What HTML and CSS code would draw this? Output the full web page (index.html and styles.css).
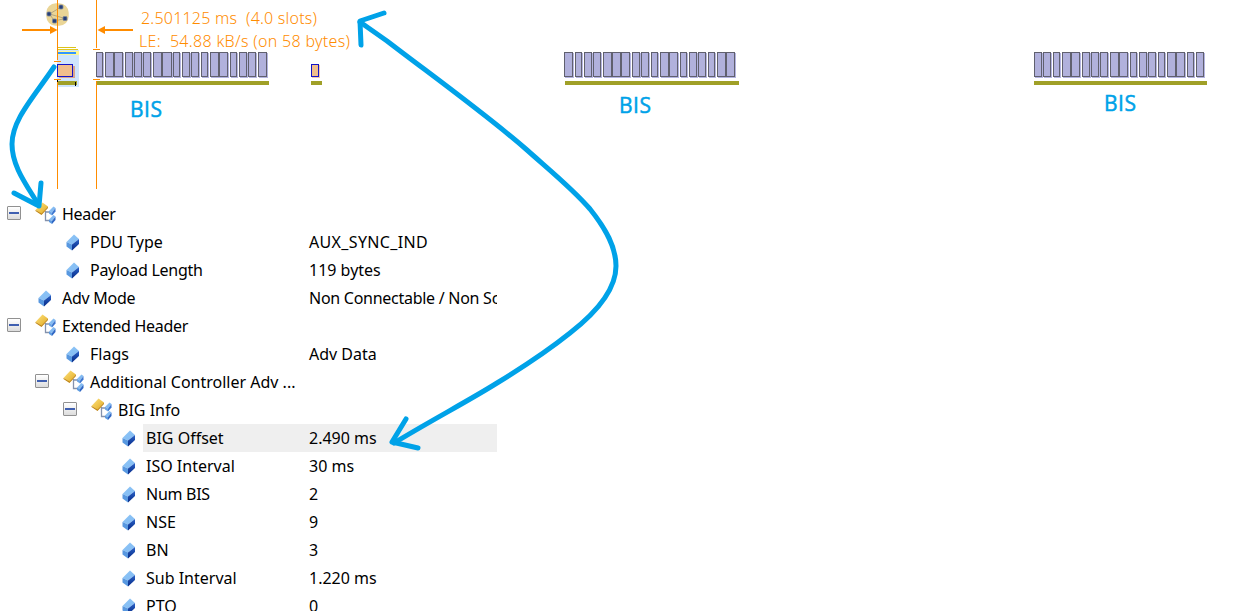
FILE: index.html
```html
<!DOCTYPE html>
<html lang="en">
<head>
    <meta charset="UTF-8">
    <meta name="viewport" content="width=device-width, initial-scale=1.0">
    <title>Packet Timeline</title>
    <link rel="stylesheet" href="styles.css">
</head>
<body>
    <svg class="defs" width="0" height="0">
        <defs>
            <linearGradient id="topFace" x1="0" y1="0" x2="1" y2="1">
                <stop offset="0" stop-color="#8cc4f5"/>
                <stop offset="1" stop-color="#84bcf4"/>
            </linearGradient>
            <linearGradient id="sideFace" x1="0" y1="0" x2="0" y2="1">
                <stop offset="0" stop-color="#2a62c8"/>
                <stop offset="1" stop-color="#062a86"/>
            </linearGradient>
            <linearGradient id="goldFace" x1="0" y1="0" x2="1" y2="1">
                <stop offset="0" stop-color="#ffe480"/>
                <stop offset="1" stop-color="#e0a820"/>
            </linearGradient>
            <symbol id="field" viewBox="0 0 14 17">
                <path d="M0.5 8 L8 0.5 L13 5 L6 10.5 Z" fill="url(#topFace)"/>
                <path d="M0.5 8 L6 10.5 V16.5 L0.5 12.500 Z" fill="#5898e0"/>
                <path d="M6 10.5 L13 5 V10 L6 16.5 Z" fill="url(#sideFace)"/>
            </symbol>
            <symbol id="group" viewBox="0 0 22 22">
                <path d="M10.5 9 V18.5 H15 M10.5 10 H15" fill="none" stroke="#8492ad" stroke-width="1.3"/>
                <path d="M0.5 8 L7.5 0.5 L13 4.5 L6.5 12 Z" fill="url(#goldFace)"/>
                <path d="M0.5 8 L6.5 11.5 L13 4.5 V6 L6.5 13 L0.5 9 Z" fill="#bf8412"/>
                <path d="M14 9 L18.5 4.5 L20.5 6 L17 10.5 Z" fill="#83bbf2"/>
                <path d="M14 9 L17 10.5 V13.5 L14 11.5 Z" fill="#6aa5e6"/>
                <path d="M17 10.5 L20.5 6 V9.5 L17 13.5 Z" fill="#3c75cf"/>
                <path d="M14 17.5 L18.5 13 L20.5 14.5 L17 19 Z" fill="#83bbf2"/>
                <path d="M14 17.5 L17 19 V22 L14 20 Z" fill="#5c9ae0"/>
                <path d="M17 19 L20.5 14.5 V18 L17 22 Z" fill="#2f66c4"/>
            </symbol>
        </defs>
    </svg>

    <svg class="timeline" width="1247" height="200" viewBox="0 0 1247 200">
        <!-- selected packet -->
        <rect x="57" y="50" width="22" height="37" fill="#cfe5fd"/>
        <rect x="57" y="47" width="19" height="1" fill="#dcc21c"/>
        <rect x="57" y="49" width="21" height="1" fill="#e0c81c"/>
        <rect x="57" y="51" width="22" height="4" fill="#fff890"/>
        <rect x="58" y="52" width="18" height="2" fill="#3296ff"/>
        <rect x="59" y="66" width="16" height="12" fill="#d9a58e"/>
        <rect x="57.5" y="64.5" width="15" height="12" class="packet"/>
        <rect x="58" y="81" width="19" height="4" class="span"/>
        <rect x="75" y="82" width="1" height="4" fill="#000"/>
        <rect x="57" y="80" width="1" height="2" fill="#000"/>

        <g id="bars"></g>

        <!-- auxiliary packet -->
        <rect x="312" y="65" width="8" height="13" fill="#f3c9ae"/>
        <rect x="311.5" y="64.5" width="7" height="12" class="packet"/>
        <rect x="311" y="81" width="11" height="4" class="span"/>

        <g transform="translate(46 3)">
            <rect x="0.3" y="0.3" width="22.4" height="22.4" rx="9.5" fill="#ead596"/>
            <path d="M3.5 11 L15 4 M3.5 11 L19 15.5 M8.5 18 L19 15.5 M3.5 11 L8.5 18" stroke="#b5a67c" fill="none"/>
            <g fill="#263f78" stroke="#7b879c" stroke-width="0.8">
                <rect x="13" y="2" width="4" height="4" rx="1"/>
                <rect x="1" y="9" width="4" height="4" rx="1"/>
                <rect x="17" y="13.5" width="4" height="4" rx="1"/>
                <rect x="6.5" y="16" width="4" height="4" rx="1"/>
            </g>
        </g>

        <!-- measuring cursors -->
        <g fill="#ff8c00">
            <rect x="57" y="0" width="1" height="60"/>
            <rect x="57" y="82" width="1" height="107"/>
            <rect x="54" y="61" width="7" height="1"/>
            <rect x="54" y="79" width="7" height="1"/>
            <rect x="96" y="0" width="1" height="48"/>
            <rect x="96" y="81" width="1" height="108"/>
            <rect x="93" y="49" width="7" height="1"/>
            <rect x="93" y="79" width="7" height="1"/>
            <rect x="22" y="29" width="30" height="2"/>
            <path d="M50 26 L57.5 30 L50 34 Z"/>
            <rect x="103" y="29" width="30" height="2"/>
            <path d="M105 26 L97.5 30 L105 34 Z"/>
        </g>
        <text x="141" y="24" textLength="176" class="measure">2.501125 ms&#160; (4.0 slots)</text>
        <text x="139" y="47" textLength="211" class="measure">LE:&#160; 54.88 kB/s (on 58 bytes)</text>

        <text x="130" y="117" textLength="32" class="bis">BIS</text>
        <text x="619" y="113" textLength="32" class="bis">BIS</text>
        <text x="1104" y="111" textLength="32" class="bis">BIS</text>
    </svg>

    <div class="tree" id="tree"></div>

    <svg class="arrows" width="1247" height="611" viewBox="0 0 1247 611">
        <path d="M54 67 C33 98 12 120 12 144 C12 166 26 184 38 204"/>
        <path d="M14 193 L39 206 L41 183"/>
        <path d="M360 22 L387 41 C430 74 487 115 527 150 C547 168 572 188 590 209 C606 229 616 247 616 266 C616 290 597 312 570 333 C545 353 515 372 497 383 C470 400 430 421 394 443"/>
        <path d="M384 13 L360 21 L361 45"/>
        <path d="M406 419 L392 442 L418 448"/>
    </svg>

    <script>
        // [x, width] of every subevent
        const events = [
            {span: [96, 173], bars: [[96,7],[105,9],[114,9],[125,8],[134,8],[143,8],[153,9],[162,10],[173,7],[182,8],[191,8],[201,7],[210,9],[219,9],[230,7],[239,8],[248,8],[258,9]]},
            {span: [565, 174], bars: [[564,9],[575,7],[584,8],[593,8],[603,9],[612,9],[621,9],[632,8],[641,8],[651,7],[660,9],[669,9],[680,7],[689,8],[698,8],[708,7],[717,9],[726,9]]},
            {span: [1034, 173], bars: [[1034,8],[1043,8],[1053,7],[1062,9],[1071,9],[1082,8],[1091,8],[1100,8],[1110,9],[1119,9],[1130,7],[1139,8],[1148,8],[1158,7],[1167,9],[1176,9],[1187,7],[1196,8]]}
        ];

        const rows = [
            {level: 0, name: 'Header', open: true, fit: 'tight'},
            {level: 1, name: 'PDU Type', value: 'AUX_SYNC_IND', fitValue: 'loose'},
            {level: 1, name: 'Payload Length', value: '119 bytes', fit: 'tight'},
            {level: 0, name: 'Adv Mode', value: 'Non Connectable / Non Sc', fit: 'tight', fitValue: 'tight'},
            {level: 0, name: 'Extended Header', open: true, fit: 'tight'},
            {level: 1, name: 'Flags', value: 'Adv Data'},
            {level: 1, name: 'Additional Controller Adv ...', open: true},
            {level: 2, name: 'BIG Info', open: true},
            {level: 3, name: 'BIG Offset', value: '2.490 ms', selected: true},
            {level: 3, name: 'ISO Interval', value: '30 ms'},
            {level: 3, name: 'Num BIS', value: '2', fit: 'tight'},
            {level: 3, name: 'NSE', value: '9'},
            {level: 3, name: 'BN', value: '3'},
            {level: 3, name: 'Sub Interval', value: '1.220 ms'},
            {level: 3, name: 'PTO', value: '0'}
        ];

        let bars = '';
        events.forEach(event => {
            event.bars.forEach(([x, w]) => {
                bars += `<rect x="${x + 1}" y="53" width="${w}" height="25" class="shadow"/>`;
            });
            event.bars.forEach(([x, w]) => {
                bars += `<rect x="${x + 0.5}" y="52.5" width="${w - 1}" height="24" class="bar"/>`;
            });
            bars += `<rect x="${event.span[0]}" y="81" width="${event.span[1]}" height="4" class="span"/>`;
        });
        document.getElementById('bars').innerHTML = bars;

        const tree = document.getElementById('tree');
        rows.forEach(row => {
            const rowElement = document.createElement('div');
            rowElement.className = `row level-${row.level}`;
            rowElement.innerHTML = `
                <div class="name">
                    <span class="toggle ${row.open ? 'open' : ''}"></span>
                    <span class="icon"><svg class="${row.open ? 'group' : 'field'}"><use href="#${row.open ? 'group' : 'field'}"/></svg></span>
                    <span class="label ${row.fit || ''} ${row.selected ? 'selected' : ''}">${row.name}</span>
                </div>
                <div class="value ${row.fitValue || ''} ${row.selected ? 'selected' : ''}">${row.value || ''}</div>
            `;
            tree.appendChild(rowElement);
        });
    </script>
</body>
</html>
```

FILE: styles.css
```css
body {
    margin: 0;
    height: 611px;
    overflow: hidden;
    position: relative;
    background-color: #fff;
    color: #000;
    font-family: "Noto Sans", Tahoma, sans-serif;
    font-size: 16px;
}
svg {
    display: block;
}
.defs {
    position: absolute;
}
.bar {
    fill: #b1b1dc;
    stroke: #60606e;
}
.shadow {
    fill: #b4b4e0;
}
.span {
    fill: #a0a028;
}
.packet {
    fill: #f0be8c;
    stroke: #1414c8;
}
.measure {
    fill: #ff8c00;
    font-family: "Noto Sans", Tahoma, sans-serif;
    font-size: 16px;
    font-weight: 300;
}
.bis {
    fill: #00a2e8;
    stroke: #00a2e8;
    stroke-width: 0.5;
    font-family: "Open Sans", "Segoe UI", sans-serif;
    font-size: 21px;
}
.tree {
    width: 497px;
}
.row {
    display: flex;
    height: 28px;
    line-height: 28px;
}
.name {
    display: flex;
    box-sizing: border-box;
    width: 306px;
    padding-left: 7px;
    white-space: nowrap;
}
.level-1 .name {
    padding-left: 35px;
}
.level-2 .name {
    padding-left: 63px;
}
.level-3 .name {
    padding-left: 91px;
}
.toggle {
    width: 14px;
    height: 14px;
    margin: 6px 14px 0 0;
    box-sizing: border-box;
}
.toggle.open {
    border: 1px solid #919191;
    border-radius: 1px;
    background: linear-gradient(#3f5fb0, #3f5fb0) center / 10px 2px no-repeat, linear-gradient(#fff, #dcdcdc);
}
.icon {
    width: 24px;
}
.group {
    width: 22px;
    height: 22px;
    margin-top: 2px;
}
.field {
    width: 14px;
    height: 17px;
    margin: 6px 0 0 3px;
}
.label {
    flex: 1;
    padding-left: 3px;
}
.value {
    flex: 1;
    padding-left: 3px;
    overflow: hidden;
    white-space: nowrap;
}
.tight {
    letter-spacing: -0.27px;
}
.loose {
    letter-spacing: 0.35px;
}
.selected {
    background-color: #efefef;
}
.arrows {
    position: absolute;
    top: 0;
    left: 0;
    fill: none;
    stroke: #00a2e8;
    stroke-width: 5;
    stroke-linecap: round;
    stroke-linejoin: round;
}
```
